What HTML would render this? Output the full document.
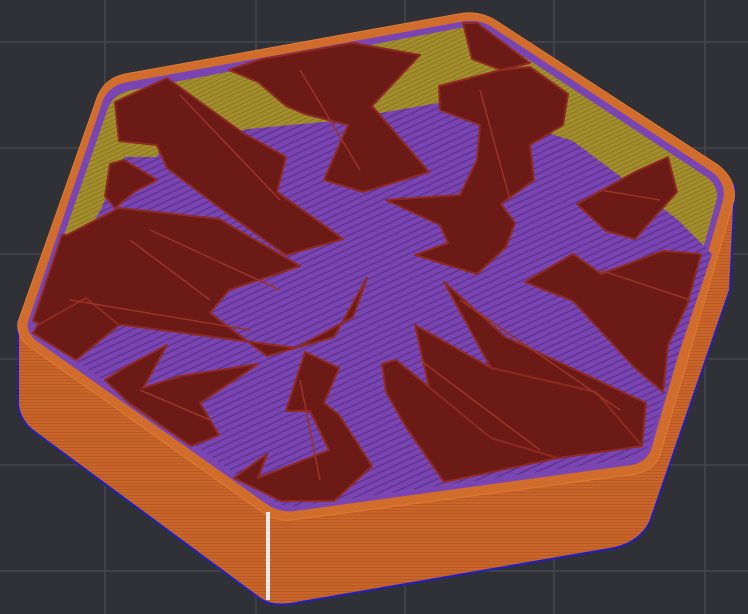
<!DOCTYPE html>
<html><head><meta charset="utf-8"><style>
html,body{margin:0;padding:0;background:#303136;}
svg{display:block}
</style></head><body>
<svg width="748" height="614" viewBox="0 0 748 614" xmlns="http://www.w3.org/2000/svg">
<defs>
<pattern id="pu" width="6" height="6" patternUnits="userSpaceOnUse" patternTransform="rotate(-25)">
<rect width="6" height="6" fill="#7a45b2"/><rect width="6" height="1.5" fill="#5e3590"/></pattern>
<pattern id="ye" width="4" height="4" patternUnits="userSpaceOnUse" patternTransform="rotate(-25)">
<rect width="4" height="4" fill="#a38e2c"/><rect width="4" height="1" fill="#8c7824"/></pattern>
<pattern id="or" width="4" height="3" patternUnits="userSpaceOnUse">
<rect width="4" height="3" fill="#c9652a"/><rect width="4" height="1" fill="#b85a24"/></pattern>
</defs>
<rect width="748" height="614" fill="#303136"/>
<g stroke="#46474c" stroke-width="1.5">
<line x1="105" y1="0" x2="105" y2="614"/><line x1="256" y1="0" x2="256" y2="614"/>
<line x1="405" y1="0" x2="405" y2="614"/><line x1="554" y1="0" x2="554" y2="614"/>
<line x1="705" y1="0" x2="705" y2="614"/>
<line x1="0" y1="42" x2="748" y2="42"/><line x1="0" y1="148" x2="748" y2="148"/>
<line x1="0" y1="254" x2="748" y2="254"/><line x1="0" y1="359" x2="748" y2="359"/>
<line x1="0" y1="465" x2="748" y2="465"/><line x1="0" y1="571" x2="748" y2="571"/>
</g>
<!-- wall -->
<path d="M18,320 L18,405 Q20,420 32,430 L262,600 Q272,606 290,604 L615,548 Q640,542 650,522 L730,290 L735,185 L18,320Z" fill="url(#or)" stroke="#2020c0" stroke-width="2"/>
<!-- rim top -->
<path d="M18,322 L98,95 Q106,78 125,74 L458,14 Q478,10 495,20 L718,165 Q737,180 734,200 L660,455 Q654,470 636,474 L292,520 Q276,522 262,512 L30,347 Q16,336 18,322Z" fill="#d06d2c" stroke="#e07a35" stroke-width="1"/>
<!-- purple rim band -->
<path d="M28,322 L103,100 Q110,85 128,82 L460,22 Q478,18 492,27 L712,172 Q727,184 723,200 L651,450 Q646,462 632,465 L295,511 Q280,513 268,505 L38,342 Q26,333 28,322Z" fill="#7a45b2"/>
<!-- inner yellow -->
<path d="M34,322 L108,108 Q114,93 132,90 L460,28 Q476,25 488,33 L708,178 Q720,188 716,202 L648,446 Q643,457 630,459 L298,506 Q283,508 272,500 L42,337 Q32,330 34,322Z" fill="url(#ye)"/>
<!-- floor -->
<path d="M34,322 L100,211 L124,157 L157,157 L162,145 L248,129 L334,121 L444,102 L477,110 L573,141 L677,219 L712,254 L648,446 Q643,457 630,459 L298,506 Q283,508 272,500 L42,337 Q32,330 34,322Z" fill="url(#pu)"/>
<!-- red shapes -->
<g fill="#6c1a16" stroke="#8e2a22" stroke-width="2" stroke-linejoin="round">
<path d="M67,235 L119,208 L219,219 L300,266 L229,290 L210,313 L267,356 L334,337 L367,278 L353,317 L296,348 L124,325 L43,325 L33,321 L62,235Z"/>
<path d="M115,102 L167,78 L243,133 L286,157 L277,192 L343,239 L286,255 L224,211 L167,168 L157,145 L119,141Z"/>
<path d="M229,70 L262,59 L353,43 L420,55 L372,106 L429,172 L363,192 L324,180 L348,125 L305,114 L286,106 L258,82Z"/>
<path d="M439,86 L501,70 L530,67 L568,94 L563,125 L530,145 L534,180 L501,204 L515,223 L506,247 L477,274 L415,255 L448,243 L440,225 L386,200 L460,195 L477,160 L480,125 L440,110Z"/>
<path d="M577,204 L635,172 L668,157 L677,192 L649,223 L635,239 L606,231Z"/>
<path d="M525,282 L573,254 L601,274 L663,251 L701,254 L687,305 L668,345 L663,392 L635,368 L573,301Z"/>
<path d="M444,282 L505,337 L646,403 L642,446 L596,392 L491,368Z"/>
<path d="M415,325 L491,368 L596,392 L642,446 L558,458 L487,462 L439,431Z"/>
<path d="M382,364 L396,360 L491,438 L558,458 L444,482 L406,427 L386,392Z"/>
<path d="M105,380 L124,368 L167,345 L143,388 L181,376 L258,364 L200,403 L219,435 L191,446 L129,403Z"/>
<path d="M234,478 L267,454 L258,478 L329,450 L310,411 L286,411 L305,352 L339,368 L324,403 L339,415 L372,466 L334,501 L281,501Z"/>
<path d="M38,325 L86,298 L119,325 L76,360 L33,333Z"/>
<path d="M463,23 L477,23 L530,63 L501,70 L472,59Z"/>
<path d="M110,164 L124,160 L157,180 L134,192 L115,208 L105,196Z"/>
</g>
<g stroke="#9a3328" stroke-width="1.5" fill="none">
<path d="M130,240 L210,300 M150,230 L280,290 M70,300 L250,330 M180,95 L280,200 M300,70 L360,170 M480,90 L510,200 M460,300 L620,410 M420,360 L540,450 M600,270 L690,300 M600,190 L660,200 M300,380 L320,480 M140,390 L210,420"/>
</g>
<rect x="266" y="512" width="4" height="88" fill="#e8e8e8"/>
</svg>
</body></html>
